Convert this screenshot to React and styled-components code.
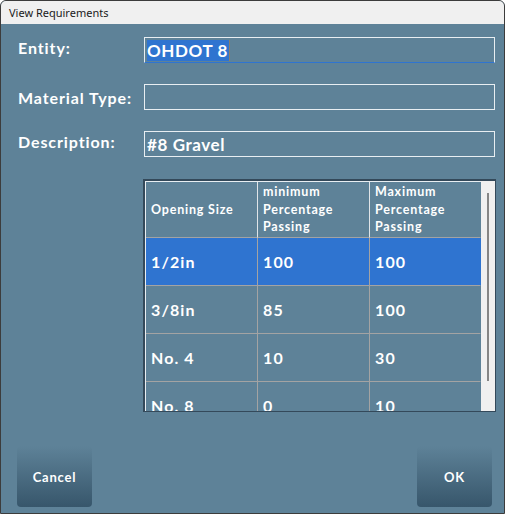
import React from 'react';
import styled, { createGlobalStyle } from 'styled-components';

const GlobalStyle = createGlobalStyle`
  html, body {
    margin: 0;
    padding: 0;
    background: #ffffff;
  }
  * {
    box-sizing: border-box;
  }
`;

const Window = styled.div`
  width: 505px;
  height: 514px;
  border: 1px solid #3c3c3c;
  border-radius: 6px 6px 0 0;
  overflow: hidden;
  display: flex;
  flex-direction: column;
  background: #5e8298;
  font-family: 'Lato', 'Liberation Sans', sans-serif;
`;

const TitleBar = styled.div`
  height: 23px;
  flex: none;
  display: flex;
  align-items: center;
  padding-left: 8px;
  background: #f0f0f0;
  color: #1a1a1a;
  font-family: 'Noto Sans', 'Liberation Sans', sans-serif;
  font-size: 11px;
`;

const Body = styled.div`
  flex: 1;
  display: flex;
  flex-direction: column;
  padding: 13px 9px 6px 16px;
`;

const FieldRow = styled.div`
  display: flex;
  align-items: center;
  height: 26px;
  margin-bottom: ${p => p.$gap || 21}px;
`;

const Label = styled.label`
  width: 127px;
  flex: none;
  padding-left: 1px;
  color: #ffffff;
  font-weight: 700;
  font-size: 16px;
  letter-spacing: 0.9px;
  margin-top: ${p => p.$up ? -6 : 0}px;
`;

const Input = styled.div`
  flex: 1;
  height: 26px;
  display: flex;
  align-items: center;
  padding-left: 2px;
  border: 1px solid #e8eef2;
  border-bottom: 1px solid ${p => p.$focused ? '#2f74d0' : '#e8eef2'};
  color: #ffffff;
  font-weight: 700;
  font-size: 17px;
  letter-spacing: 0.6px;
`;

const Selected = styled.span`
  background: #2f74d0;
  padding-right: 1px;
  border-right: 1px solid #8a7f6c;
`;

const TableWrap = styled.div`
  margin: 0 0 0 126px;
  width: 353px;
  height: 233px;
  display: flex;
  border: 1px solid #34495a;
  border-width: 2px 1px 1px 2px;
`;

const Grid = styled.div`
  flex: 1;
  display: grid;
  grid-template-columns: 112px 112px 111px;
  grid-auto-rows: 48px;
  grid-template-rows: 56px;
  border-top: 1px solid #e8eef2;
  border-left: 1px solid #e8eef2;
  overflow: hidden;
  align-content: start;
`;

const HeadCell = styled.div`
  display: flex;
  align-items: center;
  padding: 0 5px;
  color: #ffffff;
  font-weight: 700;
  font-size: 12.5px;
  letter-spacing: 0.8px;
  line-height: 17.5px;
  border-right: 1px solid ${p => p.$last ? 'transparent' : '#e0e4e8'};
  border-bottom: 1px solid #a3a3a3;
`;

const Cell = styled.div`
  display: flex;
  align-items: center;
  padding: 0 4px 0 5px;
  color: #ffffff;
  font-weight: 700;
  font-size: 16px;
  letter-spacing: 1.1px;
  background: ${p => p.$selected ? '#2f74d0' : 'transparent'};
  border-right: 1px solid ${p => p.$last ? 'transparent' : '#a3a3a3'};
  border-bottom: 1px solid #a3a3a3;
`;

const ScrollBar = styled.div`
  width: 14px;
  flex: none;
  background: #f0f0f0;
  display: flex;
  justify-content: center;
  padding-top: 12px;
`;

const Thumb = styled.div`
  width: 2px;
  height: 188px;
  background: #858585;
`;

const ButtonBar = styled.div`
  margin-top: auto;
  display: flex;
  justify-content: space-between;
  padding-right: 3px;
`;

const Button = styled.button`
  width: 75px;
  height: 61px;
  border: none;
  border-radius: 4px;
  background: linear-gradient(to bottom, #5e8298 0%, #37566b 100%);
  color: #ffffff;
  font-family: 'Lato', 'Liberation Sans', sans-serif;
  font-weight: 700;
  font-size: 13px;
  letter-spacing: 0.8px;
  cursor: pointer;
`;

const rows = [
  { size: '1/2in', min: '100', max: '100', selected: true },
  { size: '3/8in', min: '85', max: '100' },
  { size: 'No. 4', min: '10', max: '30' },
  { size: 'No. 8', min: '0', max: '10' },
];

export default function App() {
  return (
    <>
      <GlobalStyle />
      <Window>
        <TitleBar>View Requirements</TitleBar>
        <Body>
          <FieldRow>
            <Label $up>Entity:</Label>
            <Input $focused><Selected>OHDOT 8</Selected></Input>
          </FieldRow>
          <FieldRow>
            <Label>Material Type:</Label>
            <Input />
          </FieldRow>
          <FieldRow $gap={22}>
            <Label $up>Description:</Label>
            <Input>#8 Gravel</Input>
          </FieldRow>
          <TableWrap>
            <Grid>
              <HeadCell>Opening Size</HeadCell>
              <HeadCell>minimum Percentage Passing</HeadCell>
              <HeadCell $last>Maximum Percentage Passing</HeadCell>
              {rows.map(r => (
                <React.Fragment key={r.size}>
                  <Cell $selected={r.selected}>{r.size}</Cell>
                  <Cell $selected={r.selected}>{r.min}</Cell>
                  <Cell $selected={r.selected} $last>{r.max}</Cell>
                </React.Fragment>
              ))}
            </Grid>
            <ScrollBar>
              <Thumb />
            </ScrollBar>
          </TableWrap>
          <ButtonBar>
            <Button>Cancel</Button>
            <Button>OK</Button>
          </ButtonBar>
        </Body>
      </Window>
    </>
  );
}
